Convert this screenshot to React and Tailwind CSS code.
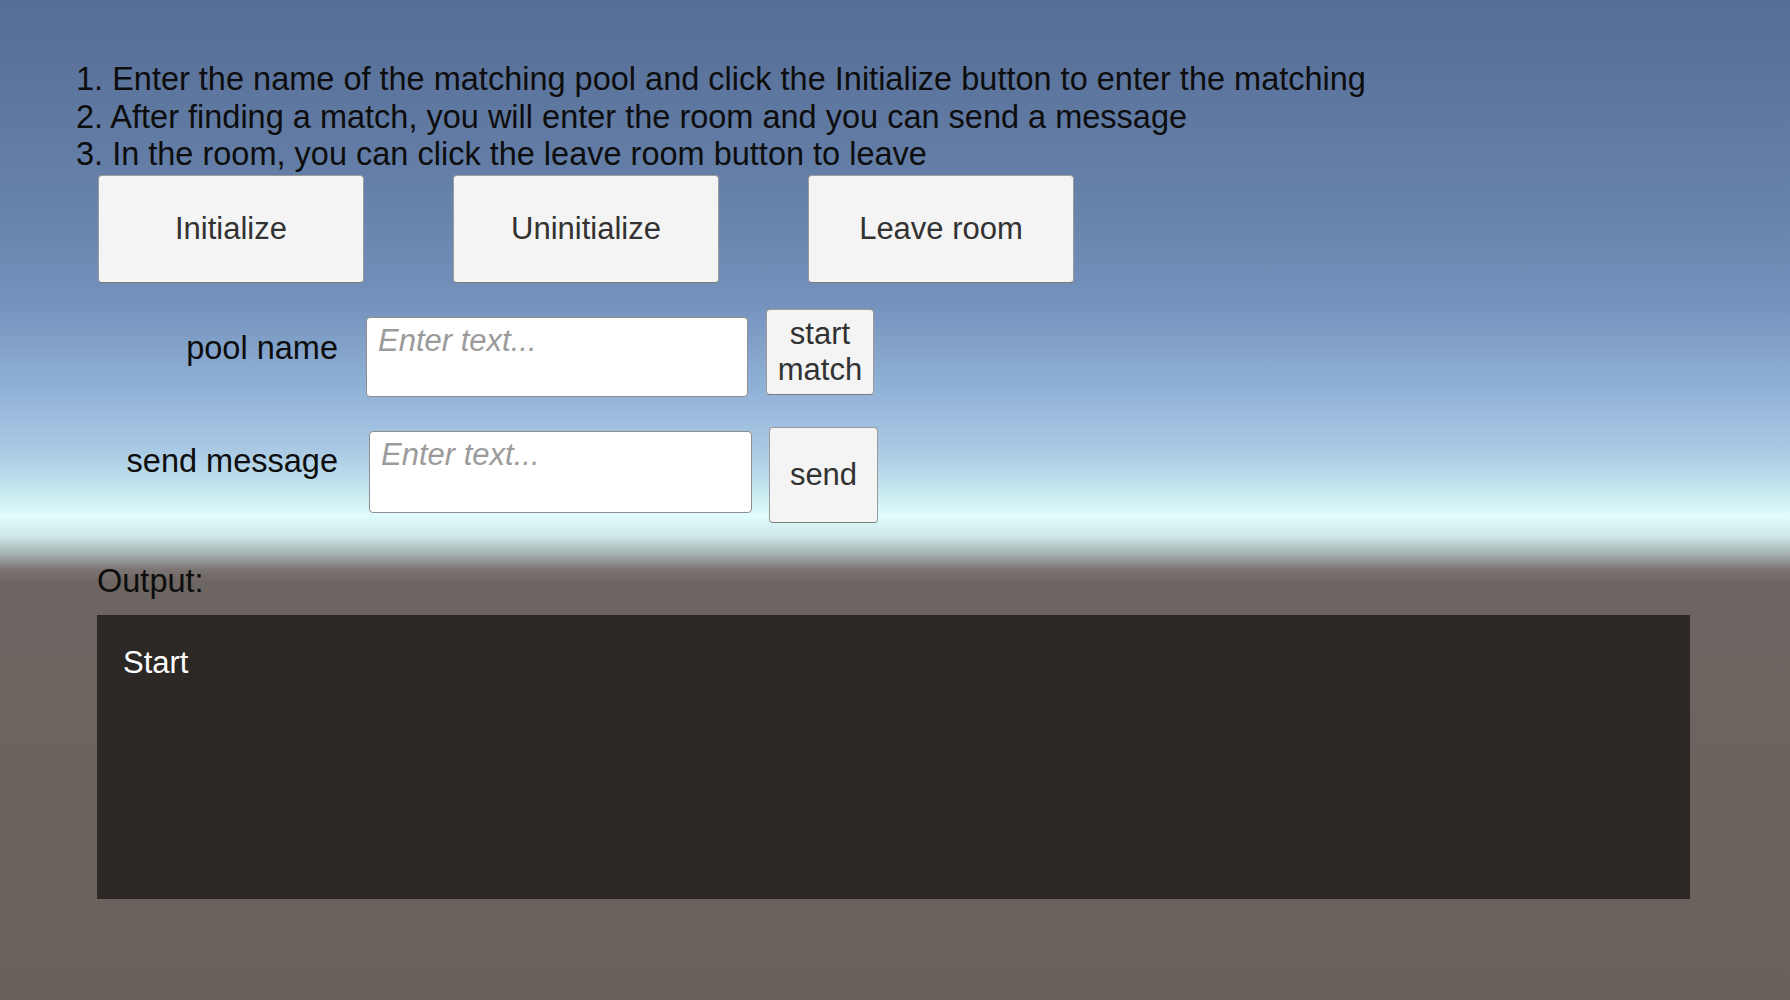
const font = { fontFamily: '"Liberation Sans", Arial, sans-serif' };

function GrayButton({ className, children }) {
  return (
    <button
      className={`flex items-center justify-center bg-[#f4f4f4] border border-[#9b9b9b] border-b-[#7d7d7d] rounded-[4px] text-[#323232] text-center ${className}`}
    >
      {children}
    </button>
  );
}

function TextBox({ className }) {
  return (
    <textarea
      placeholder="Enter text..."
      className={`bg-white border border-[#8e8e8e] rounded-[4px] resize-none outline-none px-[11px] pt-[4px] text-[31px] leading-[38px] text-[#222] placeholder:italic placeholder:text-[#9b9b9b] ${className}`}
    />
  );
}

export default function App() {
  return (
    <div
      style={font}
      className="w-full h-[1000px] overflow-hidden bg-[linear-gradient(to_bottom,#566d95_0%,#6580a9_19%,#7391bb_30%,#8fb0d6_38.5%,#a9c9e4_45%,#c4e6ee_49%,#e0fcfc_51.5%,#cfe8ea_53.6%,#a0aaa9_55.6%,#7d7675_56.9%,#6c6561_58.2%,#6a615b_100%)]"
    >
      <div className="pl-[76px] pt-[61px] flex flex-col">
        <div className="text-[32.5px] leading-[37.7px] text-[#0d0d0d]">
          <p>1. Enter the name of the matching pool and click the Initialize button to enter the matching</p>
          <p>2. After finding a match, you will enter the room and you can send a message</p>
          <p>3. In the room, you can click the leave room button to leave</p>
        </div>

        <div className="flex gap-[89px] ml-[22px] mt-[1px]">
          <GrayButton className="w-[266px] h-[108px] text-[31px]">Initialize</GrayButton>
          <GrayButton className="w-[266px] h-[108px] text-[31px]">Uninitialize</GrayButton>
          <GrayButton className="w-[266px] h-[108px] text-[31px]">Leave room</GrayButton>
        </div>

        <div className="flex items-start mt-[26px]">
          <div className="w-[262px] mt-[20px] text-right text-[32.5px] leading-[38px] text-[#0d0d0d]">pool name</div>
          <TextBox className="ml-[28px] mt-[8px] w-[382px] h-[80px]" />
          <GrayButton className="ml-[18px] w-[108px] h-[86px] text-[31px] leading-[36px]">
            start
            <br />
            match
          </GrayButton>
        </div>

        <div className="flex items-start mt-[30px]">
          <div className="w-[262px] mt-[15px] text-right text-[32.5px] leading-[38px] text-[#0d0d0d]">send message</div>
          <TextBox className="ml-[31px] mt-[4px] w-[383px] h-[82px]" />
          <GrayButton className="ml-[17px] w-[109px] h-[96px] text-[31px]">send</GrayButton>
        </div>

        <div className="ml-[21px] mt-[39px] text-[32.5px] leading-[38px] text-[#0d0d0d]">Output:</div>

        <div className="ml-[21px] mt-[15px] w-[1593px] h-[284px] bg-[#2c2826] pl-[26px] pt-[29px]">
          <p className="text-white text-[31px] leading-[38px]">Start</p>
        </div>
      </div>
    </div>
  );
}
